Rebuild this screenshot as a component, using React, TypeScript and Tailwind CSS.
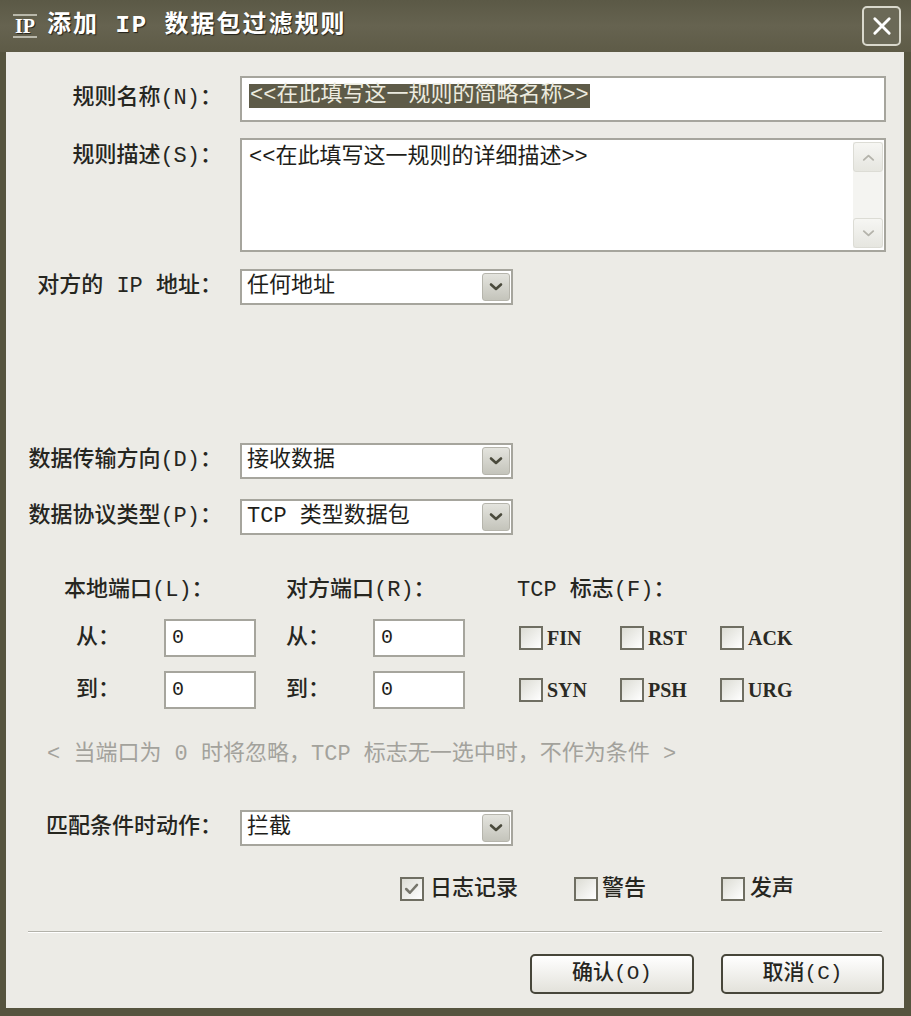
import React from "react";

const FONT = "font-['Liberation_Mono','Noto_Sans_CJK_SC',monospace]";

function Chevron({ down = true, color = "#4a4a3c", size = 14, w = 2.6 }: { down?: boolean; color?: string; size?: number; w?: number }) {
  return (
    <svg viewBox="0 0 16 16" width={size} height={size}>
      <path
        d={down ? "M3 5.5l5 4.5 5-4.5" : "M3 10.5l5-4.5 5 4.5"}
        fill="none"
        stroke={color}
        strokeWidth={w}
        strokeLinecap="round"
        strokeLinejoin="round"
      />
    </svg>
  );
}

function Select({ value }: { value: string }) {
  return (
    <div className="w-[273px] h-[36px] border-2 border-[#a6a59d] bg-white flex items-center">
      <span className="flex-1 pl-[5px] text-[22px] leading-none text-[#1e1e1a]">{value}</span>
      <div className="w-[28px] h-[28px] mr-[1px] rounded-[3px] border border-[#b6b5ac] bg-linear-to-b from-[#e4e4de] to-[#c4c4bb] flex items-center justify-center">
        <Chevron size={16} />
      </div>
    </div>
  );
}

function Box({ checked = false }: { checked?: boolean }) {
  return (
    <span className="w-[24px] h-[24px] shrink-0 border-2 border-[#6f6e62] bg-linear-to-br from-[#dcdcd4] to-white flex items-center justify-center">
      {checked && (
        <svg viewBox="0 0 24 24" width="20" height="20">
          <path d="M5 12l4.5 4.5L18 7" fill="none" stroke="#77766c" strokeWidth="3" strokeLinecap="round" strokeLinejoin="round" />
        </svg>
      )}
    </span>
  );
}

function Flag({ label, w }: { label: string; w: string }) {
  return (
    <div className={`flex items-center ${w}`}>
      <Box />
      <span className="ml-[4px] font-['Liberation_Serif',serif] text-[20px] font-bold leading-none text-[#2a2a24]">{label}</span>
    </div>
  );
}

function PortInput() {
  return (
    <div className="w-[92px] h-[38px] border-2 border-[#a6a59d] bg-white flex items-center pl-[6px] text-[20px] leading-none text-[#1e1e1a]">
      0
    </div>
  );
}

export default function App() {
  const label = "w-[234px] shrink-0 text-right pr-[18px] text-[22px] leading-[28px] font-medium text-[#26261f]";
  return (
    <div className={`w-[911px] h-[1016px] bg-[#56543f] flex flex-col ${FONT}`}>
      {/* Title bar */}
      <div className="h-[52px] shrink-0 flex items-center bg-linear-to-b from-[#5b5946] via-[#666350] to-[#5e5b47] pl-[13px] pr-[10px]">
        <span className="border-y-2 border-[#b9b8aa] font-['Liberation_Serif',serif] text-[20px] leading-[20px] font-bold text-white px-[2px] [text-shadow:1px_1px_0_#2a2920]">
          IP
        </span>
        <span className="ml-[10px] text-[24px] font-bold text-white tracking-[2px] [text-shadow:1px_1px_1px_#22211a]">
          添加 IP 数据包过滤规则
        </span>
        <div className="ml-auto w-[39px] h-[40px] rounded-[5px] border-2 border-[#d9d8cc] bg-[#6b6957] flex items-center justify-center">
          <svg viewBox="0 0 20 20" width="24" height="24">
            <path d="M4 4l12 12M16 4L4 16" stroke="white" strokeWidth="2.4" strokeLinecap="round" />
          </svg>
        </div>
      </div>

      {/* Body */}
      <div className="flex-1 ml-[6px] mr-[7px] mb-[8px] bg-[#ecebe6] flex flex-col">
        {/* Rule name */}
        <div className="mt-[24px] flex items-center">
          <span className={label}>规则名称(N)：</span>
          <div className="w-[646px] h-[46px] border-2 border-[#a6a59d] bg-white flex items-start pt-[6px] pl-[7px]">
            <span className="bg-[#5e5b48] text-[#ecebdf] text-[22px] leading-[24px] px-[1px]">
              &lt;&lt;在此填写这一规则的简略名称&gt;&gt;
            </span>
          </div>
        </div>

        {/* Rule description */}
        <div className="mt-[16px] flex items-start">
          <span className={`${label} pt-[5px]`}>规则描述(S)：</span>
          <div className="w-[646px] h-[114px] border-2 border-[#a6a59d] bg-white flex">
            <span className="flex-1 pl-[7px] pt-[5px] text-[22px] leading-[26px] text-[#1e1e1a]">
              &lt;&lt;在此填写这一规则的详细描述&gt;&gt;
            </span>
            <div className="w-[30px] mr-[1px] my-[2px] bg-[#f4f4f1] flex flex-col justify-between">
              <div className="h-[30px] rounded-[3px] border border-[#dcdcd5] bg-linear-to-b from-[#f6f6f3] to-[#e6e6e0] flex items-center justify-center">
                <Chevron down={false} color="#b4b3ab" size={15} w={2} />
              </div>
              <div className="h-[30px] rounded-[3px] border border-[#dcdcd5] bg-linear-to-b from-[#f6f6f3] to-[#e6e6e0] flex items-center justify-center">
                <Chevron color="#b4b3ab" size={15} w={2} />
              </div>
            </div>
          </div>
        </div>

        {/* Remote IP */}
        <div className="mt-[17px] flex items-center">
          <span className={label}>对方的 IP 地址：</span>
          <Select value="任何地址" />
        </div>

        {/* Direction */}
        <div className="mt-[138px] flex items-center">
          <span className={label}>数据传输方向(D)：</span>
          <Select value="接收数据" />
        </div>

        {/* Protocol */}
        <div className="mt-[20px] flex items-center">
          <span className={label}>数据协议类型(P)：</span>
          <Select value="TCP 类型数据包" />
        </div>

        {/* Ports header */}
        <div className="mt-[42px] h-[28px] flex items-center pl-[58px] text-[22px] leading-[28px] font-medium text-[#26261f]">
          <span className="w-[222px]">本地端口(L)：</span>
          <span className="w-[231px]">对方端口(R)：</span>
          <span>TCP 标志(F)：</span>
        </div>

        {/* From row */}
        <div className="mt-[14px] flex items-center pl-[70px] text-[22px] font-medium text-[#26261f]">
          <span className="w-[88px]">从：</span>
          <PortInput />
          <span className="ml-[30px] w-[87px]">从：</span>
          <PortInput />
          <div className="ml-[54px] flex items-center">
            <Flag label="FIN" w="w-[101px]" />
            <Flag label="RST" w="w-[100px]" />
            <Flag label="ACK" w="w-[100px]" />
          </div>
        </div>

        {/* To row */}
        <div className="mt-[14px] flex items-center pl-[70px] text-[22px] font-medium text-[#26261f]">
          <span className="w-[88px]">到：</span>
          <PortInput />
          <span className="ml-[30px] w-[87px]">到：</span>
          <PortInput />
          <div className="ml-[54px] flex items-center">
            <Flag label="SYN" w="w-[101px]" />
            <Flag label="PSH" w="w-[100px]" />
            <Flag label="URG" w="w-[100px]" />
          </div>
        </div>

        {/* Hint */}
        <div className="mt-[32px] h-[28px] pl-[41px] text-[22px] leading-[28px] text-[#a3a29c]">
          &lt; 当端口为 0 时将忽略，TCP 标志无一选中时，不作为条件 &gt;
        </div>

        {/* Action */}
        <div className="mt-[41px] flex items-center">
          <span className={label}>匹配条件时动作：</span>
          <Select value="拦截" />
        </div>

        {/* Log / alert / sound */}
        <div className="mt-[29px] h-[28px] flex items-center pl-[394px] text-[22px] font-medium text-[#26261f]">
          <div className="w-[174px] flex items-center">
            <Box checked />
            <span className="ml-[6px]">日志记录</span>
          </div>
          <div className="w-[147px] flex items-center">
            <Box />
            <span className="ml-[4px]">警告</span>
          </div>
          <div className="flex items-center">
            <Box />
            <span className="ml-[5px]">发声</span>
          </div>
        </div>

        {/* Separator */}
        <div className="mt-[28px] mx-[22px] border-t border-[#b3b2aa] border-b border-b-white" />

        {/* Buttons */}
        <div className="mt-[21px] flex pl-[524px] gap-[27px]">
          <button className="w-[164px] h-[40px] rounded-[5px] border-2 border-[#47463a] bg-linear-to-b from-white to-[#e3e2db] text-[21px] font-medium text-[#26261f]">
            确认(O)
          </button>
          <button className="w-[163px] h-[40px] rounded-[5px] border-2 border-[#47463a] bg-linear-to-b from-white to-[#e3e2db] text-[21px] font-medium text-[#26261f]">
            取消(C)
          </button>
        </div>
      </div>
    </div>
  );
}
